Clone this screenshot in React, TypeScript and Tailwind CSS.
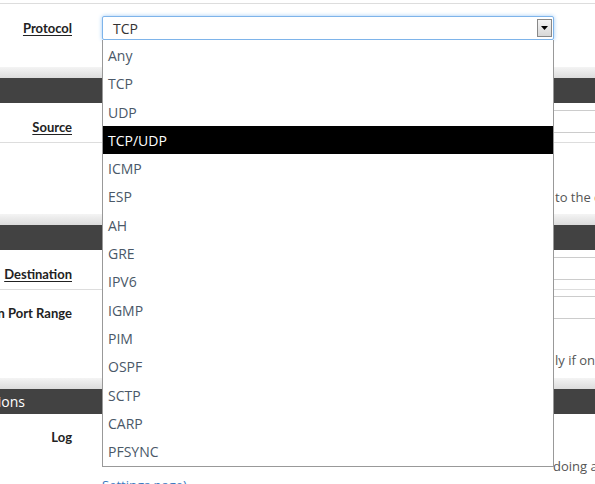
const options = ["Any", "TCP", "UDP", "TCP/UDP", "ICMP", "ESP", "AH", "GRE", "IPV6", "IGMP", "PIM", "OSPF", "SCTP", "CARP", "PFSYNC"];

const Band = ({ title }: { title?: string }) => (
  <>
    <div className="h-[11px] bg-gradient-to-b from-[#f4f4f4] to-[#dcdcdc]" />
    <div className="h-[25px] bg-[#424242] text-white text-[14px] leading-[25px] -ml-[64px]">{title}</div>
  </>
);

const Label = ({ children, underline = true }: { children: string; underline?: boolean }) => (
  <div className="w-[72px] shrink-0 flex justify-end text-[13px] font-bold text-[#222] whitespace-nowrap" style={{ fontFamily: 'Lato, sans-serif' }}>
    <span className={underline ? "underline underline-offset-2" : ""}>{children}</span>
  </div>
);

const Field = () => <div className="ml-[481px] mt-[-8px] w-[60px] h-[23px] border-y border-[#ccc] shrink-0" />;

export default function App() {
  return (
    <div className="relative w-[595px] h-[484px] overflow-hidden bg-white text-[#555]" style={{ fontFamily: '"Open Sans", "Noto Sans", sans-serif' }}>
      <div className="h-[3px]" />
      <div className="border-t border-[#ddd] h-[64px] flex pt-[15px]">
        <Label>Protocol</Label>
      </div>
      <Band />
      <div className="h-[40px] flex pt-[15px] border-b border-[#ddd]">
        <Label>Source</Label>
        <Field />
      </div>
      <div className="h-[71px] flex flex-col justify-end pb-[7px] pl-[555px]">
        <div className="text-[13px] whitespace-nowrap">to the destination</div>
      </div>
      <Band />
      <div className="h-[40px] flex pt-[15px] border-b border-[#ddd]">
        <Label>Destination</Label>
        <Field />
      </div>
      <div className="h-[88px] flex flex-col pt-[14px]">
        <div className="flex">
          <Label underline={false}>Destination Port Range</Label>
          <Field />
        </div>
        <div className="mt-auto mb-[8px] pl-[555px] text-[13px] whitespace-nowrap">ly if only</div>
      </div>
      <Band title="Extra Options" />
      <div className="h-[66px] flex flex-col pt-[14px]">
        <Label underline={false}>Log</Label>
        <div className="mt-[9px] pl-[553px] text-[13px] whitespace-nowrap">doing a lot</div>
        <div className="pl-[102px] text-[13px] whitespace-nowrap text-[#3a7abf]">Settings page).</div>
      </div>

      {/* select + open dropdown */}
      <div className="absolute left-[102px] top-[16px] w-[452px]">
        <div className="h-[24px] border border-[#7eb4ea] rounded-[2px] shadow-[0_0_4px_#9ecaf5] bg-white flex items-center pl-[10px] text-[14px] text-[#333]">
          <span className="flex-1">TCP</span>
          <div className="w-[15px] h-[18px] mr-[1px] border border-[#888] bg-gradient-to-b from-[#f4f4f4] to-[#d8d8d8] flex items-center justify-center">
            <svg width="7" height="4" viewBox="0 0 7 4"><path d="M0 0h7L3.5 4z" fill="#000" /></svg>
          </div>
        </div>
        <div className="border border-[#999] border-t-0 bg-white pt-[1px] h-[427px]">
          {options.map((o) => (
            <div
              key={o}
              className={`h-[28.3px] leading-[30px] pl-[5px] text-[14px] ${o === "TCP/UDP" ? "bg-black text-white" : "text-[#4a5868]"}`}
            >
              {o}
            </div>
          ))}
        </div>
      </div>
    </div>
  );
}
